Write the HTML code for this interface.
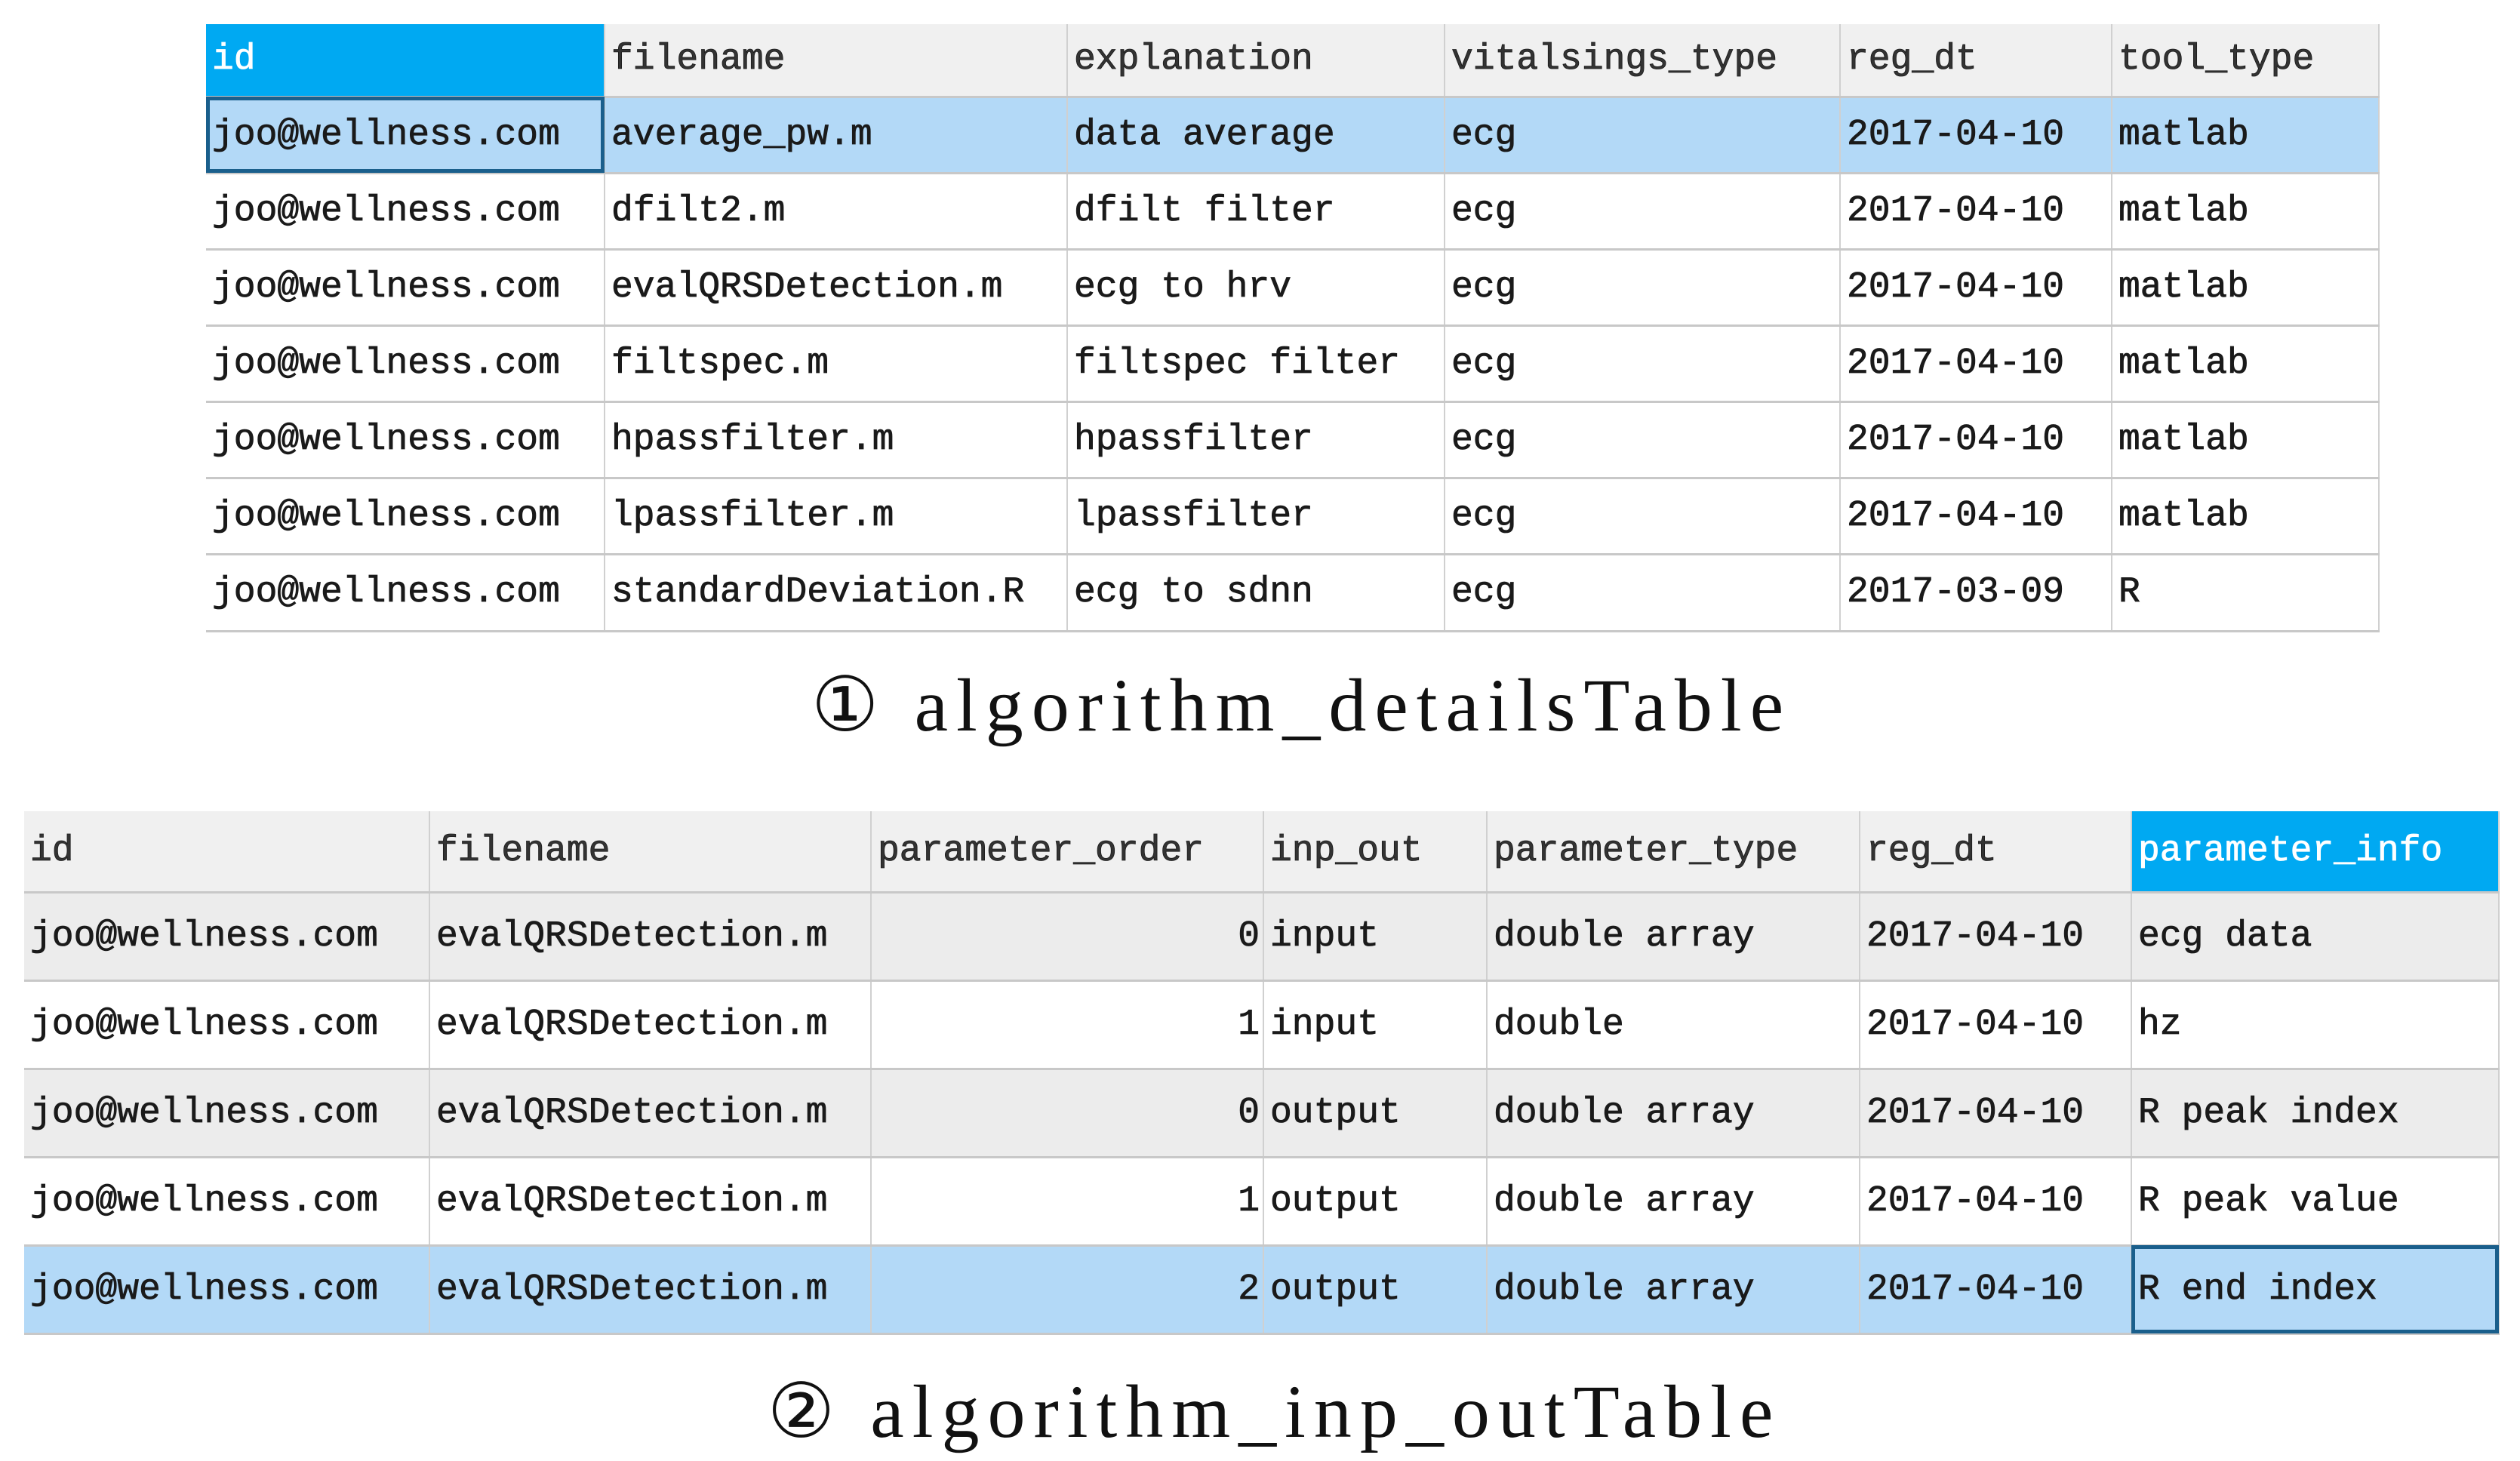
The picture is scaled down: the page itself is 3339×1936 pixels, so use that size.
<!DOCTYPE html>
<html><head><meta charset="utf-8"><style>
body{margin:0;width:3339px;height:1935px;background:#fff;position:relative;overflow:hidden;font-family:"Liberation Mono",monospace;}
table{position:absolute;border-collapse:collapse;table-layout:fixed;}
td{font-size:48px;color:#1a1a1a;padding:0 0 0 8px;white-space:nowrap;overflow:hidden;border-right:2px solid #d0d0d0;border-bottom:3px solid #c8c8c8;-webkit-text-stroke:0.8px #1a1a1a;}
tr.h td{background:#f0f0f0;color:#333;}
tr.h td.b{background:#00a9f2;color:#fff;-webkit-text-stroke:0.8px #fff;}
tr.s td{background:#b3d9f7;}
tr.s td.sel{outline:5px solid #1a5f8c;outline-offset:-5px;}
tr.g td{background:#ececec;}
td.r{text-align:right;padding-right:4px;}
.cap{position:absolute;width:3339px;text-align:center;font-family:"Liberation Serif","DejaVu Serif",serif;font-size:100px;line-height:130px;color:#111;letter-spacing:11px;}
</style></head><body>
<table style="left:273px;top:32px;width:2879px">
<colgroup><col style="width:528px"><col style="width:613px"><col style="width:500px"><col style="width:524px"><col style="width:360px"><col style="width:354px"></colgroup>
<tr class="h" style="height:96px"><td class="b">id</td><td>filename</td><td>explanation</td><td>vitalsings_type</td><td>reg_dt</td><td>tool_type</td></tr>
<tr class="s" style="height:101px"><td class="sel">joo@wellness.com</td><td>average_pw.m</td><td>data average</td><td>ecg</td><td>2017-04-10</td><td>matlab</td></tr>
<tr style="height:101px"><td>joo@wellness.com</td><td>dfilt2.m</td><td>dfilt filter</td><td>ecg</td><td>2017-04-10</td><td>matlab</td></tr>
<tr style="height:101px"><td>joo@wellness.com</td><td>evalQRSDetection.m</td><td>ecg to hrv</td><td>ecg</td><td>2017-04-10</td><td>matlab</td></tr>
<tr style="height:101px"><td>joo@wellness.com</td><td>filtspec.m</td><td>filtspec filter</td><td>ecg</td><td>2017-04-10</td><td>matlab</td></tr>
<tr style="height:101px"><td>joo@wellness.com</td><td>hpassfilter.m</td><td>hpassfilter</td><td>ecg</td><td>2017-04-10</td><td>matlab</td></tr>
<tr style="height:101px"><td>joo@wellness.com</td><td>lpassfilter.m</td><td>lpassfilter</td><td>ecg</td><td>2017-04-10</td><td>matlab</td></tr>
<tr style="height:102px"><td>joo@wellness.com</td><td>standardDeviation.R</td><td>ecg to sdnn</td><td>ecg</td><td>2017-03-09</td><td>R</td></tr>
</table>
<div class="cap" style="left:55px;top:870px">① algorithm_detailsTable</div>
<table style="left:32px;top:1075px;width:3279px">
<colgroup><col style="width:537px"><col style="width:585px"><col style="width:520px"><col style="width:296px"><col style="width:494px"><col style="width:360px"><col style="width:487px"></colgroup>
<tr class="h" style="height:107px"><td>id</td><td>filename</td><td>parameter_order</td><td>inp_out</td><td>parameter_type</td><td>reg_dt</td><td class="b">parameter_info</td></tr>
<tr class="g" style="height:117px"><td>joo@wellness.com</td><td>evalQRSDetection.m</td><td class="r">0</td><td>input</td><td>double array</td><td>2017-04-10</td><td>ecg data</td></tr>
<tr style="height:117px"><td>joo@wellness.com</td><td>evalQRSDetection.m</td><td class="r">1</td><td>input</td><td>double</td><td>2017-04-10</td><td>hz</td></tr>
<tr class="g" style="height:117px"><td>joo@wellness.com</td><td>evalQRSDetection.m</td><td class="r">0</td><td>output</td><td>double array</td><td>2017-04-10</td><td>R peak index</td></tr>
<tr style="height:117px"><td>joo@wellness.com</td><td>evalQRSDetection.m</td><td class="r">1</td><td>output</td><td>double array</td><td>2017-04-10</td><td>R peak value</td></tr>
<tr class="s" style="height:117px"><td>joo@wellness.com</td><td>evalQRSDetection.m</td><td class="r">2</td><td>output</td><td>double array</td><td>2017-04-10</td><td class="sel">R end index</td></tr>
</table>
<div class="cap" style="left:19px;top:1806px">② algorithm_inp_outTable</div>
</body></html>
